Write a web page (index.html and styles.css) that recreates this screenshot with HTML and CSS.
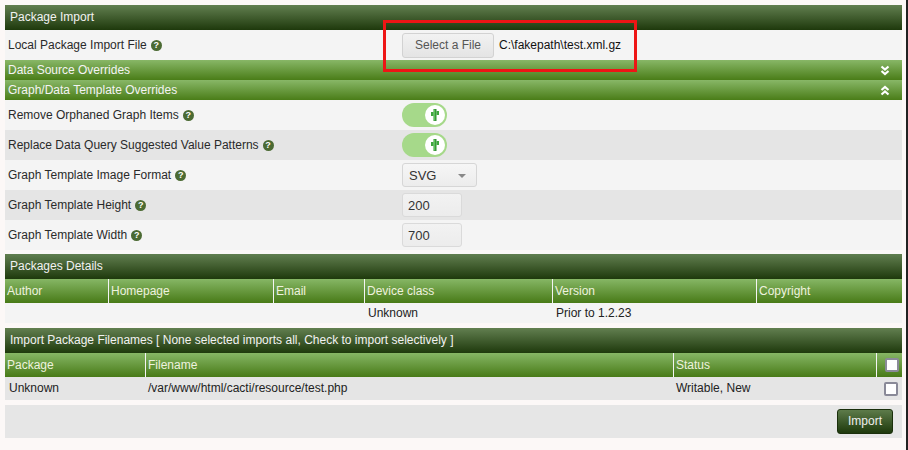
FILE: index.html
```html
<!DOCTYPE html>
<html>
<head>
<meta charset="utf-8">
<link rel="stylesheet" href="styles.css">
</head>
<body>
<div class="panel">
  <div class="hdr">Package Import</div>
  <div class="frow light">
    <div class="lbl">Local Package Import File <span class="help">?</span></div>
    <div class="ctl">
      <span class="filebtn">Select a File</span>
      <span class="fname">C:\fakepath\test.xml.gz</span>
    </div>
  </div>
  <div class="bar">
    <span>Data Source Overrides</span>
    <svg class="chev" width="10" height="11" viewBox="0 0 10 11"><polyline points="1.5,1.5 5,4.5 8.5,1.5" /><polyline points="1.5,6 5,9 8.5,6" /></svg>
  </div>
  <div class="bar">
    <span>Graph/Data Template Overrides</span>
    <svg class="chev" width="10" height="11" viewBox="0 0 10 11"><polyline points="1.5,5 5,2 8.5,5" /><polyline points="1.5,9.5 5,6.5 8.5,9.5" /></svg>
  </div>
  <div class="frow light">
    <div class="lbl">Remove Orphaned Graph Items <span class="help">?</span></div>
    <div class="ctl"><span class="toggle"><span class="knob"><svg width="12" height="14" viewBox="0 0 12 14"><rect x="4.5" y="1" width="3" height="12" fill="#2f8f2f"/><rect x="2" y="4" width="2.5" height="4" fill="#3fa53f"/><rect x="7.5" y="3" width="2.5" height="4" fill="#3fa53f"/><rect x="5" y="1.5" width="1.2" height="11" fill="#5cc45c"/></svg></span></span></div>
  </div>
  <div class="frow dark">
    <div class="lbl">Replace Data Query Suggested Value Patterns <span class="help">?</span></div>
    <div class="ctl"><span class="toggle"><span class="knob"><svg width="12" height="14" viewBox="0 0 12 14"><rect x="4.5" y="1" width="3" height="12" fill="#2f8f2f"/><rect x="2" y="4" width="2.5" height="4" fill="#3fa53f"/><rect x="7.5" y="3" width="2.5" height="4" fill="#3fa53f"/><rect x="5" y="1.5" width="1.2" height="11" fill="#5cc45c"/></svg></span></span></div>
  </div>
  <div class="frow light">
    <div class="lbl">Graph Template Image Format <span class="help">?</span></div>
    <div class="ctl"><span class="select">SVG<span class="caret"></span></span></div>
  </div>
  <div class="frow dark">
    <div class="lbl">Graph Template Height <span class="help">?</span></div>
    <div class="ctl"><span class="input">200</span></div>
  </div>
  <div class="frow light">
    <div class="lbl">Graph Template Width <span class="help">?</span></div>
    <div class="ctl"><span class="input">700</span></div>
  </div>
</div>

<div class="panel gap">
  <div class="hdr">Packages Details</div>
  <div class="grid details cols">
    <div>Author</div><div>Homepage</div><div>Email</div><div>Device class</div><div>Version</div><div>Copyright</div>
  </div>
  <div class="grid details drow light">
    <div></div><div></div><div></div><div>Unknown</div><div>Prior to 1.2.23</div><div></div>
  </div>
</div>

<div class="panel gap">
  <div class="hdr">Import Package Filenames [ None selected imports all, Check to import selectively ]</div>
  <div class="grid files cols">
    <div>Package</div><div>Filename</div><div>Status</div><div class="cb"><span class="check"></span></div>
  </div>
  <div class="grid files frow2 dark">
    <div>Unknown</div><div>/var/www/html/cacti/resource/test.php</div><div>Writable, New</div><div class="cb"><span class="check"></span></div>
  </div>
</div>

<div class="actions">
  <span class="btn">Import</span>
</div>

<div class="annot"></div>
</body>
</html>
```

FILE: styles.css
```css
html {
  margin: 0;
  border-right: 2px solid #222;
  background: #fcf8f7;
  height: 450px;
  box-sizing: border-box;
  overflow: hidden;
}
body {
  margin: 5px 4px 0 5px;
  font-family: "Liberation Sans", Arial, sans-serif;
  font-size: 12px;
  color: #222;
}
.panel.gap { margin-top: 4px; }
.panel.gap + .panel.gap { margin-top: 5px; }
.hdr {
  height: 25px;
  line-height: 25px;
  padding-left: 5px;
  color: #f2f2f2;
  background: linear-gradient(#627f50, #1e390c);
}
.light { background: #f4f4f4; }
.dark { background: #e5e5e5; }
.frow {
  display: grid;
  grid-template-columns: 397px 1fr;
  height: 30px;
  align-items: center;
}
.lbl { padding-left: 3px; display: flex; align-items: center; color: #2a2a2a; }
.help {
  display: inline-flex;
  width: 11px;
  height: 11px;
  border-radius: 50%;
  background: #4b6a33;
  color: #fff;
  font-size: 9px;
  font-weight: bold;
  align-items: center;
  justify-content: center;
  margin-left: 4px;
  line-height: 1;
}
.ctl { display: flex; align-items: center; }
.filebtn {
  display: inline-block;
  width: 90px;
  height: 23px;
  line-height: 23px;
  text-align: center;
  color: #555;
  border: 1px solid #d2d2d2;
  border-radius: 3px;
  background: linear-gradient(#f2f2f2, #e4e4e4);
}
.fname { margin-left: 5px; color: #111; }
.bar {
  height: 20px;
  display: flex;
  align-items: center;
  justify-content: space-between;
  padding: 0 12px 0 3px;
  color: #f4f4f4;
  background: linear-gradient(#88b767, #4a7d18);
}
.chev polyline { fill: none; stroke: #fff; stroke-width: 2.2; }
.toggle {
  display: inline-flex;
  justify-content: flex-end;
  align-items: center;
  width: 45px;
  height: 24px;
  border-radius: 12px;
  background: #a6d98a;
  padding-right: 2px;
  box-sizing: border-box;
}
.knob {
  width: 20px;
  height: 20px;
  border-radius: 50%;
  background: #fff;
  display: flex;
  align-items: center;
  justify-content: center;
}
.select {
  position: relative;
  display: inline-block;
  width: 75px;
  height: 24px;
  line-height: 24px;
  padding-left: 6px;
  box-sizing: border-box;
  border: 1px solid #d6d6d6;
  border-radius: 3px;
  background: linear-gradient(#f6f6f6, #ececec);
  color: #333;
  font-size: 13px;
}
.caret {
  position: absolute;
  right: 10px;
  top: 10px;
  border-left: 4px solid transparent;
  border-right: 4px solid transparent;
  border-top: 4px solid #888;
}
.input {
  display: inline-block;
  width: 60px;
  height: 24px;
  line-height: 24px;
  padding-left: 5px;
  box-sizing: border-box;
  border: 1px solid #dadada;
  border-radius: 3px;
  background: linear-gradient(#f2f2f2, #ececec);
  color: #333;
  font-size: 13px;
}
.grid { display: grid; }
.details { grid-template-columns: 103px 165px 91px 188px 204px 146px; }
.files { grid-template-columns: 140px 528px 203px 26px; }
.cols {
  height: 24px;
  align-items: stretch;
  color: #eef2df;
  background: linear-gradient(#86b665, #487a17);
}
.cols > div { line-height: 24px; padding-left: 2px; border-left: 1px solid #f4f4f4; }
.cols > div:first-child { border-left: none; }
.drow { height: 20px; line-height: 20px; }
.drow > div { padding-left: 4px; }
.frow2 { height: 23px; line-height: 23px; }
.frow2 > div { padding-left: 3px; }
.frow2 > div:first-child { padding-left: 4px; }
.cb { display: flex; align-items: center; justify-content: center; padding-left: 0 !important; }
.check {
  display: inline-block;
  width: 10px;
  height: 10px;
  border: 2px solid #8a8a98;
  border-radius: 2px;
  background: #fff;
  margin-left: 4px;
}
.actions {
  margin-top: 5px;
  height: 33px;
  background: #e6e6e6;
  display: flex;
  align-items: center;
  justify-content: flex-end;
  padding-right: 9px;
}
.btn {
  display: inline-block;
  height: 23px;
  line-height: 23px;
  padding: 0 10px;
  color: #eee;
  border: 1px solid #1a2f0b;
  border-radius: 3px;
  background: linear-gradient(#5d7b4a, #1e390c);
}
.annot {
  position: absolute;
  left: 383px;
  top: 20px;
  width: 254px;
  height: 52px;
  box-sizing: border-box;
  border: 3px solid #ee1515;
}
```
